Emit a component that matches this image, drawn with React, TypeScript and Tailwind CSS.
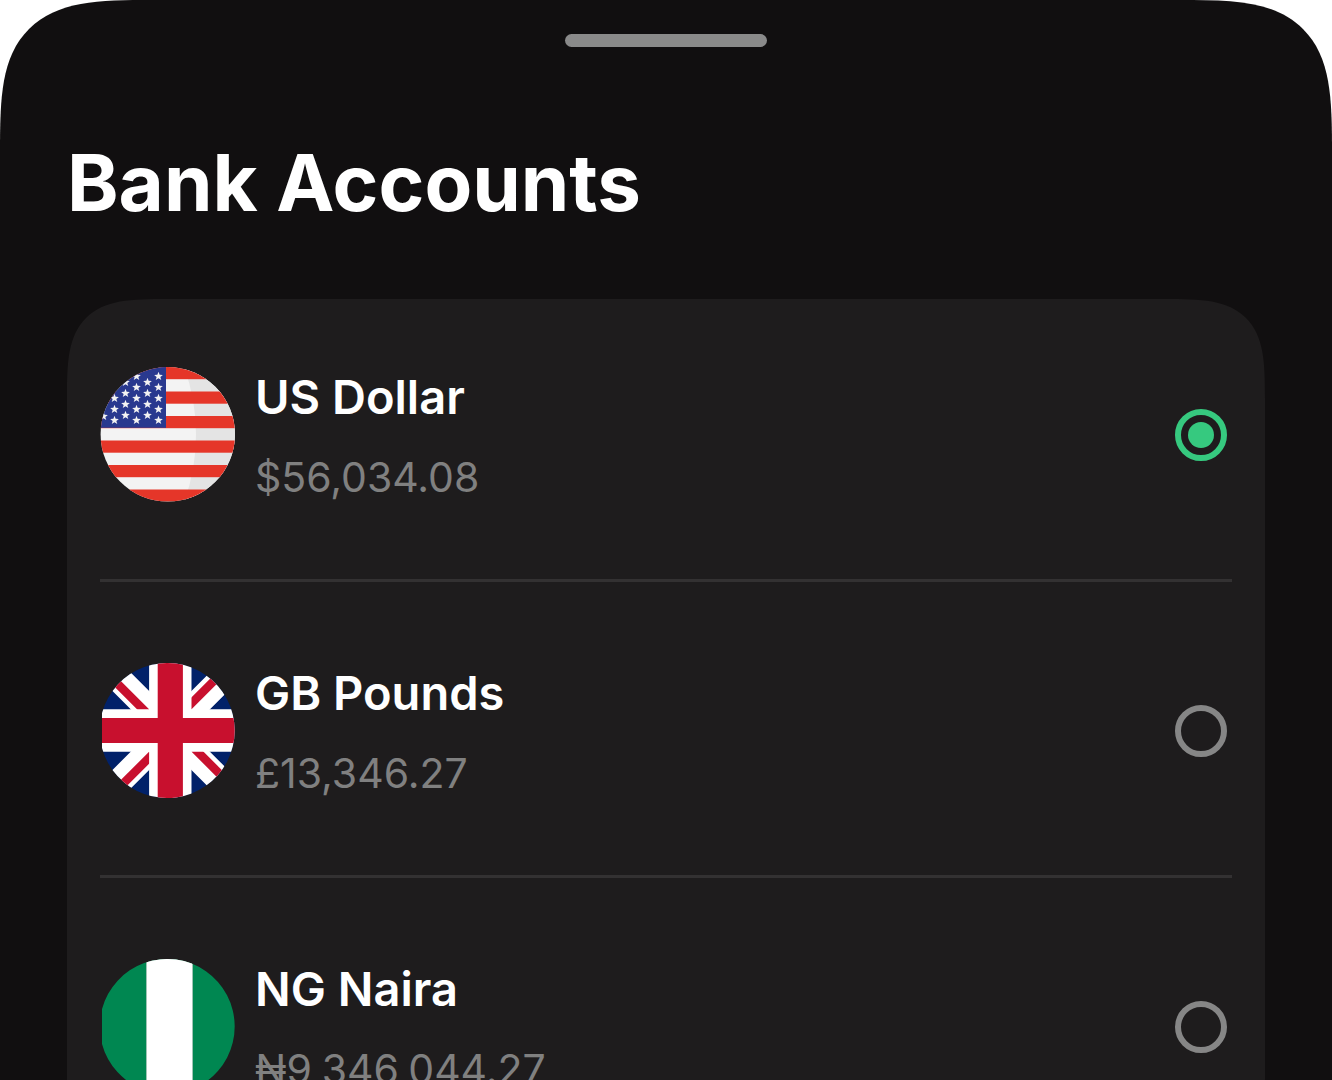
import { useState } from 'react'
import type { ReactNode } from 'react'

interface Account {
  id: string
  name: string
  balance: string
  flag: ReactNode
}

const STAR_COLUMNS = [
  { x: 3, ys: [49] },
  { x: 14, ys: [31, 42, 53] },
  { x: 25, ys: [15, 26, 37, 48] },
  { x: 36, ys: [9, 20, 31, 42, 53] },
  { x: 47, ys: [15, 26, 37, 48] },
  { x: 58, ys: [9, 20, 31, 42, 53] },
]

const STAR_PATH = 'M0-4 1-1.3 3.8-1.2 1.6.5 2.4 3.2 0 1.7-2.4 3.2-1.6.5-3.8-1.2-1-1.3Z'

function FlagUS() {
  return (
    <svg viewBox="0 0 135 135" className="size-[135px] shrink-0" aria-hidden="true">
      <clipPath id="us-clip">
        <circle cx="67.8" cy="67.3" r="67.2" />
      </clipPath>
      <g clipPath="url(#us-clip)">
        <rect width="135" height="135" fill="#f3f3f3" />
        <path d="M84 0Q96 32 96 67.5T84 135H135V0Z" fill="#e4e4e4" />
        {[0, 1, 2, 3, 4, 5].map((i) => (
          <rect key={i} y={i * 24.5} width="135" height="12.2" fill="#e53629" />
        ))}
        <rect width="66" height="60.8" fill="#29398f" />
        {STAR_COLUMNS.map(({ x, ys }) =>
          ys.map((y) => (
            <path
              key={`${x}-${y}`}
              d={STAR_PATH}
              transform={`translate(${x + 0.5} ${y + 0.3}) scale(1.15)`}
              fill="#f3f3f3"
            />
          )),
        )}
      </g>
    </svg>
  )
}

function FlagGB() {
  return (
    <svg viewBox="0 0 135 135" className="size-[135px] shrink-0" aria-hidden="true">
      <clipPath id="gb-clip">
        <path d="M2 50A67.5 67.5 0 1 1 2 85Z" />
      </clipPath>
      <g clipPath="url(#gb-clip)">
        <rect width="135" height="135" fill="#012169" />
        <g transform="translate(70.3 67.5)">
          <path d="M-80-80 80 80M80-80-80 80" stroke="#fff" strokeWidth="26" />
          <g fill="#c8102e">
            <path d="M-80-80 0 0V12L-80-68Z" />
            <path d="M80-80 0 0V-12L80-92Z" />
            <path d="M-80 80 0 0V12L-80 92Z" />
            <path d="M80 80 0 0V-12L80 68Z" />
          </g>
          <path d="M0-80V80M-80 0H80" stroke="#fff" strokeWidth="42.4" />
          <path d="M0-80V80M-80 0H80" stroke="#c8102e" strokeWidth="25.2" />
        </g>
      </g>
    </svg>
  )
}

function FlagNG() {
  return (
    <svg viewBox="0 0 135 135" className="size-[135px] shrink-0" aria-hidden="true">
      <clipPath id="ng-clip">
        <path d="M2 50A67.5 67.5 0 1 1 2 85Z" />
      </clipPath>
      <g clipPath="url(#ng-clip)">
        <rect width="135" height="135" fill="#008751" />
        <rect x="46" width="47" height="135" fill="#9fc4b4" />
        <rect x="47" width="45" height="135" fill="#fff" />
      </g>
    </svg>
  )
}

const ACCOUNTS: Account[] = [
  { id: 'usd', name: 'US Dollar', balance: '$56,034.08', flag: <FlagUS /> },
  { id: 'gbp', name: 'GB Pounds', balance: '£13,346.27', flag: <FlagGB /> },
  { id: 'ngn', name: 'NG Naira', balance: '₦9,346,044.27', flag: <FlagNG /> },
]

interface AccountRowProps {
  account: Account
  checked: boolean
  onSelect: () => void
}

function AccountRow({ account, checked, onSelect }: AccountRowProps) {
  return (
    <li className="border-b-[3px] border-[#333132] pb-[77px] last:border-b-0">
      <label className="flex cursor-pointer items-center gap-5 pr-[5px]">
        {account.flag}
        <span className="flex min-w-0 flex-1 flex-col gap-[26px]">
          <span className="text-[47px] leading-[58px] font-semibold text-white">{account.name}</span>
          <span className="text-[41px] leading-[50px] text-[#808080]">{account.balance}</span>
        </span>
        <input
          type="radio"
          name="account"
          value={account.id}
          checked={checked}
          onChange={onSelect}
          className="grid size-[52px] shrink-0 appearance-none place-items-center rounded-full border-[6px] border-[#868686] before:size-[26px] before:rounded-full checked:border-[#36c97f] checked:before:bg-[#36c97f]"
        />
      </label>
    </li>
  )
}

export default function App() {
  const [selected, setSelected] = useState('usd')

  return (
    <div className="h-screen overflow-hidden bg-white font-['Inter',sans-serif]">
      <main className="flex min-h-full flex-col rounded-t-[153px] bg-[#110f10] px-[67px] pt-[34px] [corner-shape:superellipse(1.72)]">
        <div className="h-[13px] w-[202px] self-center rounded-full bg-[#8a8a8a]" />
        <h1 className="mt-[88px] text-[78px] leading-[96px] font-bold text-white">Bank Accounts</h1>
        <ul className="mt-[68px] flex flex-col gap-[81px] rounded-[100px] bg-[#1e1c1d] px-[33px] pt-[68px] [corner-shape:superellipse(1.72)]">
          {ACCOUNTS.map((account) => (
            <AccountRow
              key={account.id}
              account={account}
              checked={selected === account.id}
              onSelect={() => setSelected(account.id)}
            />
          ))}
        </ul>
      </main>
    </div>
  )
}
